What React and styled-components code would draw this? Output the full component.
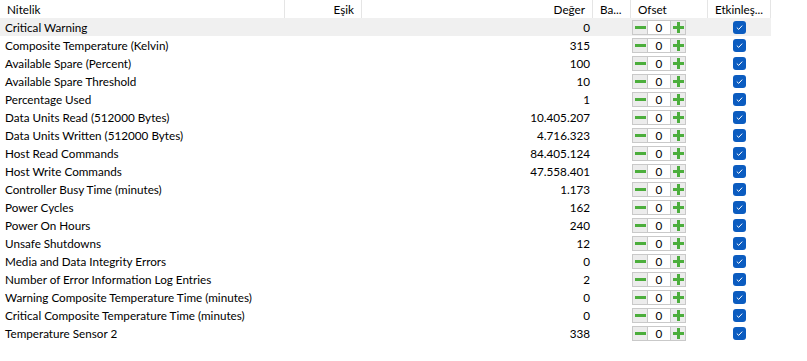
import React from "react";
import styled, { createGlobalStyle } from "styled-components";

const Global = createGlobalStyle`
  html, body { margin: 0; padding: 0; background: #ffffff; }
  body { font-family: "Lato", "Noto Sans", sans-serif; font-size: 11.7px; color: #000; }
`;

const COLS = "285px 77px 231px 38px 77px 63px";

const Table = styled.div`
  width: 807px;
  height: 361px;
  background: #fff;
  overflow: hidden;
`;

const HeaderRow = styled.div`
  display: grid;
  grid-template-columns: ${COLS};
  height: 18px;
`;

const HeaderCell = styled.div`
  display: flex;
  align-items: center;
  justify-content: ${(p) => p.$align || "flex-start"};
  padding: 0 ${(p) => (p.$align === "flex-end" ? "7px" : "0")} 0 ${(p) => (p.$align === "flex-start" || !p.$align ? "7px" : "0")};
  border-right: 1px solid #e5e5e5;
  white-space: nowrap;
  overflow: hidden;
  box-sizing: border-box;
  height: 18px;
`;

const Row = styled.div`
  display: grid;
  grid-template-columns: ${COLS};
  height: 18px;
  background: ${(p) => (p.$selected ? "#f0f0f0" : "transparent")};
  width: 771px;
`;

const Cell = styled.div`
  display: flex;
  align-items: center;
  justify-content: ${(p) => p.$align || "flex-start"};
  padding-left: ${(p) => (p.$pad != null ? p.$pad : !p.$align || p.$align === "flex-start" ? "5px" : "0")};
  padding-right: ${(p) => (p.$align === "flex-end" ? "3px" : "0")};
  white-space: nowrap;
  overflow: hidden;
  box-sizing: border-box;
  height: 18px;
`;

const Spinner = styled.div`
  display: flex;
  height: 15px;
  margin-left: 1px;
`;

const SpinBtn = styled.div`
  width: 16px;
  height: 15px;
  box-sizing: border-box;
  border: 1px solid #c9c9c9;
  background: #ececec;
  display: flex;
  align-items: center;
  justify-content: center;
`;

const SpinValue = styled.div`
  width: 22px;
  height: 15px;
  box-sizing: border-box;
  border-top: 1px solid #c9c9c9;
  border-bottom: 1px solid #c9c9c9;
  background: #fff;
  display: flex;
  align-items: center;
  justify-content: center;
`;

const Check = styled.div`
  width: 13px;
  height: 13px;
  border-radius: 3px;
  background: #0b5cc0;
  display: flex;
  align-items: center;
  justify-content: center;
`;

const Minus = () => (
  <svg width="11" height="11" viewBox="0 0 11 11">
    <rect x="0" y="4" width="11" height="3" fill="#4cae3c" />
  </svg>
);

const Plus = () => (
  <svg width="11" height="11" viewBox="0 0 11 11">
    <rect x="0" y="4" width="11" height="3" fill="#4cae3c" />
    <rect x="4" y="0" width="3" height="11" fill="#4cae3c" />
  </svg>
);

const CheckMark = () => (
  <svg width="9" height="9" viewBox="0 0 9 9">
    <path d="M1.8 4.6 L3.7 6.4 L7.2 2.6" stroke="#fff" strokeWidth="1" fill="none" />
  </svg>
);

const rows = [
  ["Critical Warning", "0"],
  ["Composite Temperature (Kelvin)", "315"],
  ["Available Spare (Percent)", "100"],
  ["Available Spare Threshold", "10"],
  ["Percentage Used", "1"],
  ["Data Units Read (512000 Bytes)", "10.405.207"],
  ["Data Units Written (512000 Bytes)", "4.716.323"],
  ["Host Read Commands", "84.405.124"],
  ["Host Write Commands", "47.558.401"],
  ["Controller Busy Time (minutes)", "1.173"],
  ["Power Cycles", "162"],
  ["Power On Hours", "240"],
  ["Unsafe Shutdowns", "12"],
  ["Media and Data Integrity Errors", "0"],
  ["Number of Error Information Log Entries", "2"],
  ["Warning Composite Temperature Time (minutes)", "0"],
  ["Critical Composite Temperature Time (minutes)", "0"],
  ["Temperature Sensor 2", "338"],
];

export default function App() {
  return (
    <>
      <Global />
      <Table>
        <HeaderRow>
          <HeaderCell>Nitelik</HeaderCell>
          <HeaderCell $align="flex-end">Eşik</HeaderCell>
          <HeaderCell $align="flex-end">Değer</HeaderCell>
          <HeaderCell>Ba...</HeaderCell>
          <HeaderCell>Ofset</HeaderCell>
          <HeaderCell $align="center">Etkinleş...</HeaderCell>
        </HeaderRow>
        {rows.map(([name, val], i) => (
          <Row key={name} $selected={i === 0}>
            <Cell>{name}</Cell>
            <Cell />
            <Cell $align="flex-end">{val}</Cell>
            <Cell />
            <Cell $pad="0">
              <Spinner>
                <SpinBtn><Minus /></SpinBtn>
                <SpinValue>0</SpinValue>
                <SpinBtn><Plus /></SpinBtn>
              </Spinner>
            </Cell>
            <Cell $align="center">
              <Check><CheckMark /></Check>
            </Cell>
          </Row>
        ))}
      </Table>
    </>
  );
}
